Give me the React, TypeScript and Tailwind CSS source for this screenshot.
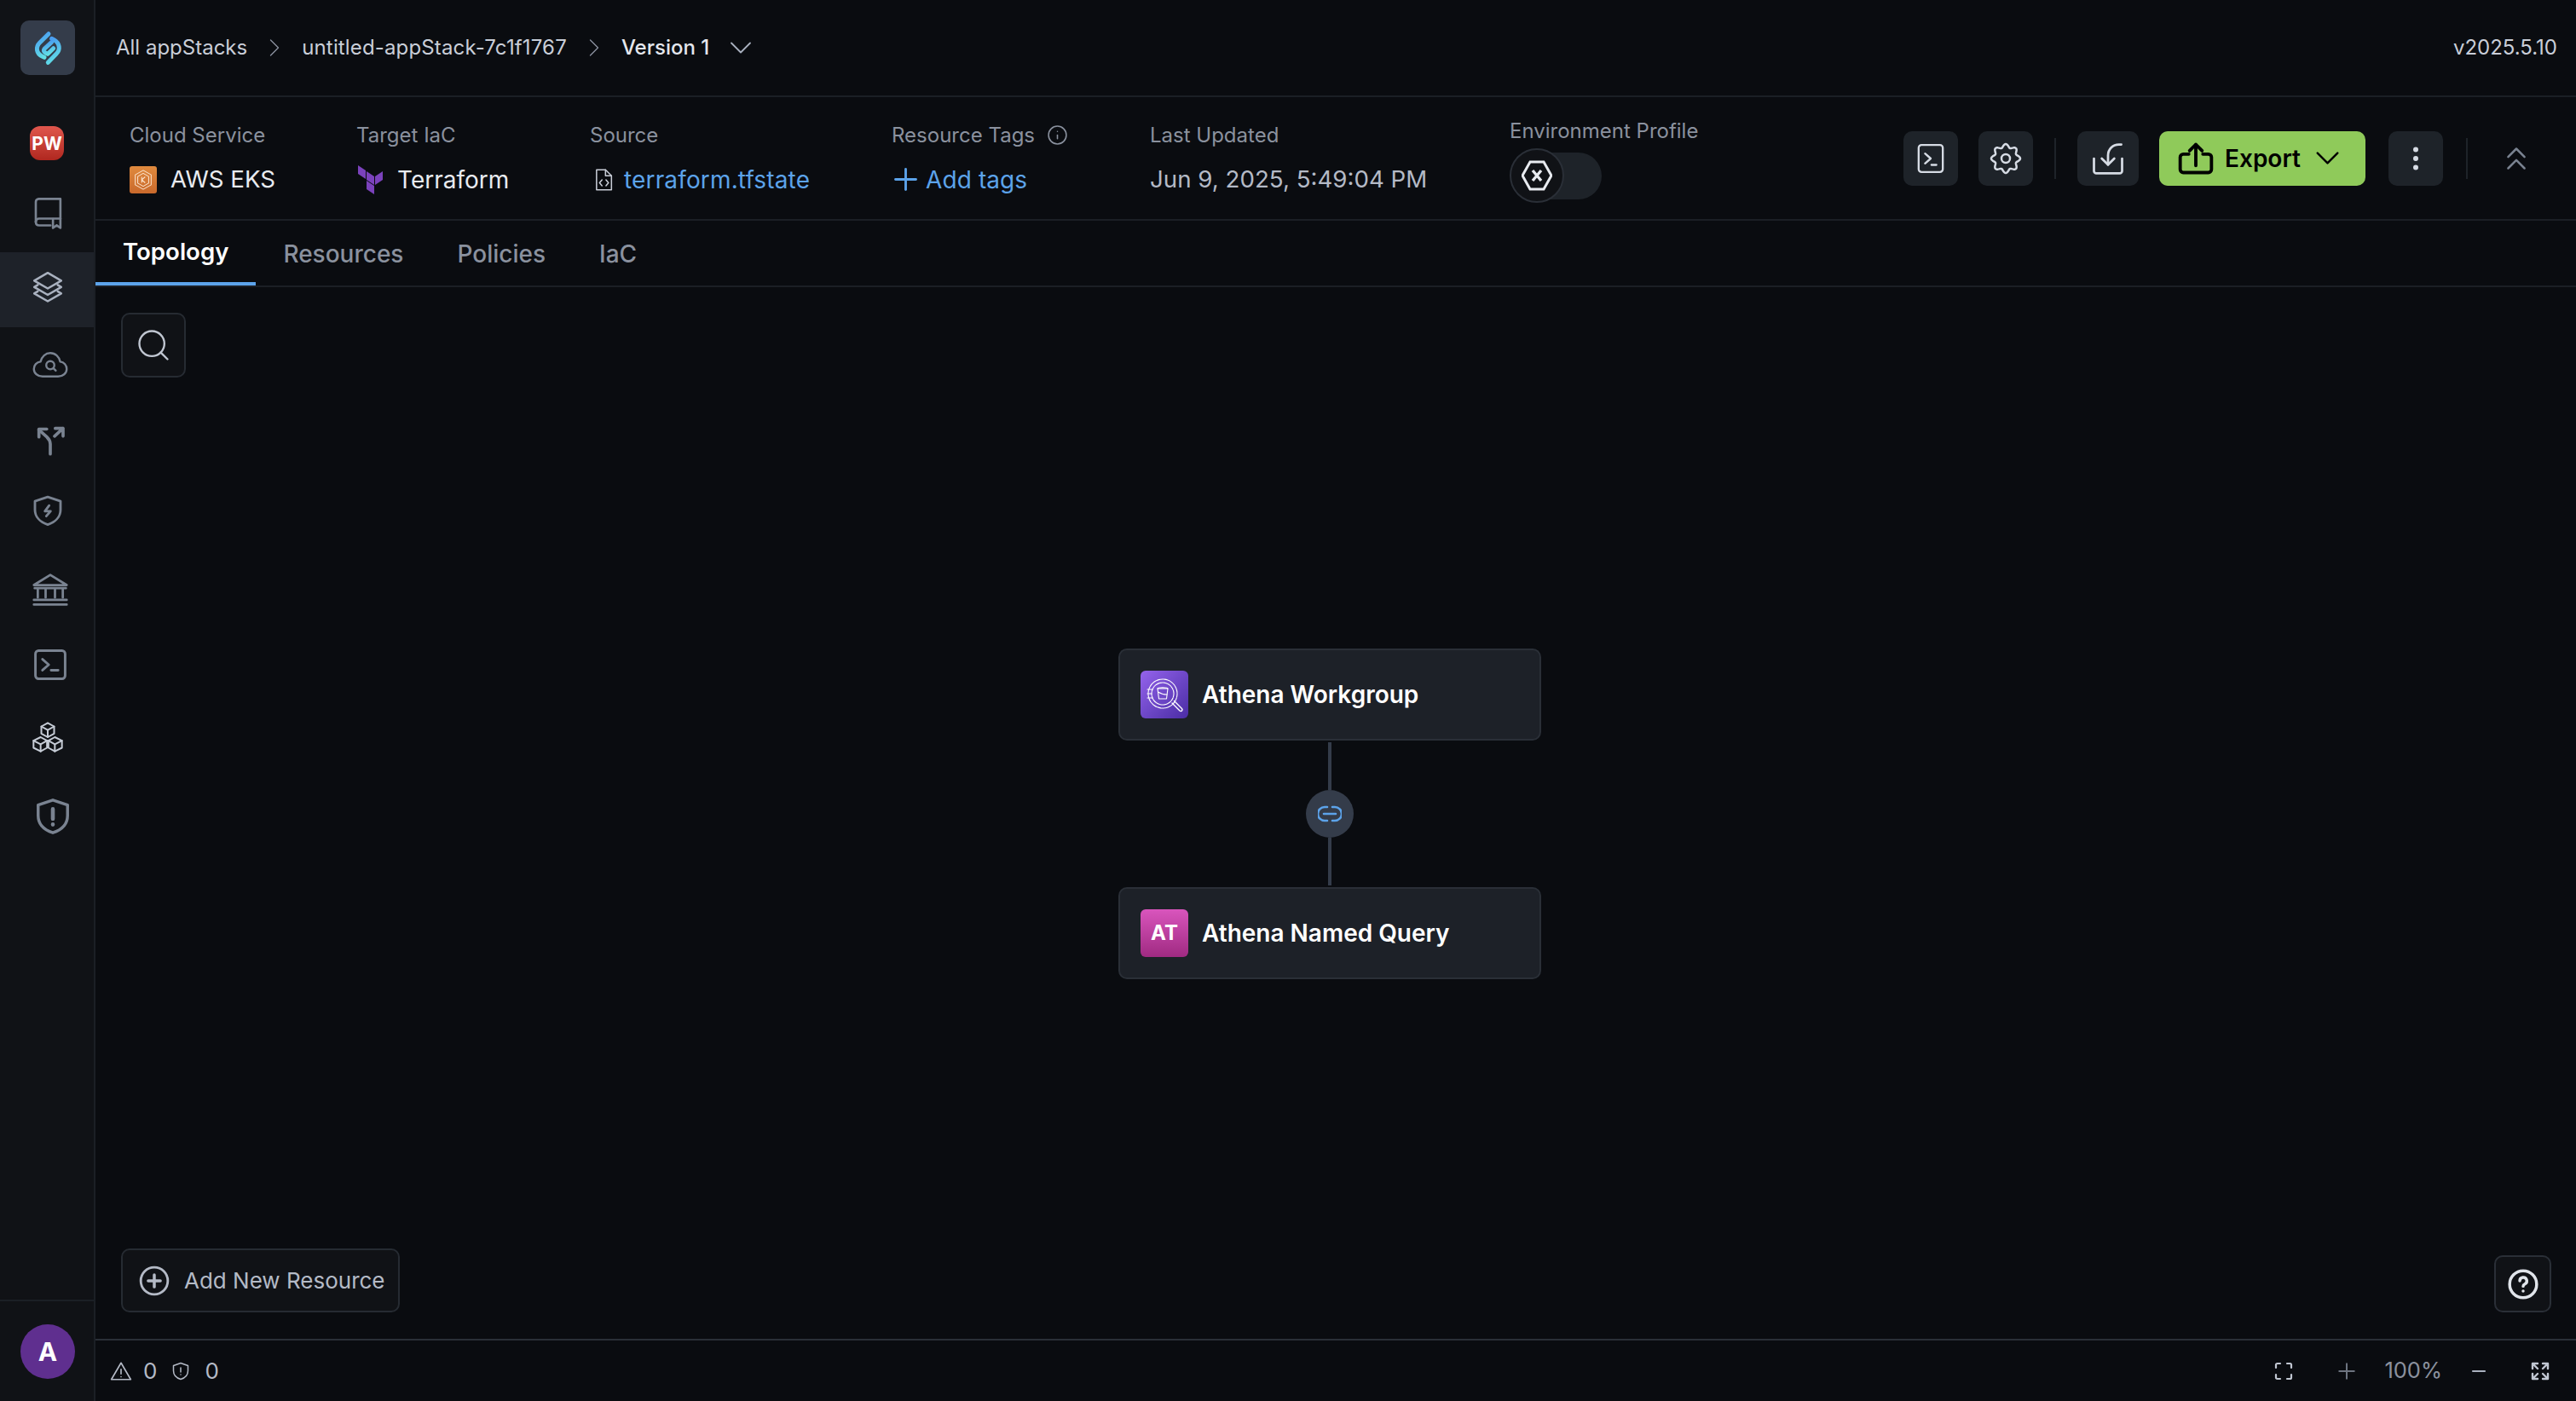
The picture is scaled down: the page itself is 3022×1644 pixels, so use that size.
import React from "react";
import { Search, ChevronRight, ChevronDown, Plus, Info, EllipsisVertical, ChevronsUp, Minus } from "lucide-react";

const S = (p: React.SVGProps<SVGSVGElement> & { children: React.ReactNode }) => (
  <svg viewBox="0 0 24 24" fill="none" stroke="currentColor" strokeLinecap="round" strokeLinejoin="round" {...p} />
);

const gearPath = (() => {
  const pts: string[] = [];
  for (let i = 0; i < 120; i++) {
    const t = (i / 120) * Math.PI * 2;
    const r = 9 + 1.2 * Math.cos(8 * t);
    pts.push(`${(12 + r * Math.sin(t)).toFixed(2)} ${(12 - r * Math.cos(t)).toFixed(2)}`);
  }
  return `M${pts.join("L")}Z`;
})();

const Logo = () => (
  <svg width="64" height="64" viewBox="0 0 192 192" fill="none" strokeWidth="15" strokeLinecap="round" strokeLinejoin="round">
    <defs>
      <linearGradient id="lg" x1="0.3" y1="0" x2="0.6" y2="1">
        <stop offset="0" stopColor="#4a9df0" />
        <stop offset="1" stopColor="#62e0e6" />
      </linearGradient>
    </defs>
    <path stroke="url(#lg)" d="M99 47 L68 78 C52 94 56 116 76 126 L84 130" />
    <path stroke="url(#lg)" d="M97 148 L126 118 C142 102 138 80 118 68 L110 64" />
    <path stroke="url(#lg)" d="M110 76 L84 100 C80 106 82 110 88 114 L96 118 L116 98" />
  </svg>
);

const BookIcon = () => (
  <S width="42" height="42" strokeWidth="1.5" className="text-[#7a8391]">
    <path d="M4 18V4.500C4 3.500 4.700 2.500 6 2.500h14.500v13.200" />
    <path d="M4 18c0-1.500 1-2.300 2.300-2.300h14.200" />
    <path d="M4 18c0 1.500 1 2.300 2.300 2.300h7.500M20.500 15.700v6.300l-2.500-1.800-2.500 1.800v-6" />
  </S>
);
const LayersIcon = () => (
  <S width="40" height="40" strokeWidth="1.500" className="text-[#a9b1bf]">
    <path d="M12 2.500 21.500 8 12 13.500 2.500 8Z" />
    <path d="M5 11 2.500 12.500 12 18l9.500-5.500L19 11" />
    <path d="M5 15.500 2.500 17 12 22.500 21.500 17 19 15.500" />
  </S>
);
const CloudIcon = () => (
  <S width="44" height="44" strokeWidth="1.300" className="text-[#7a8391]">
    <path d="M7 19.500c-3 0-5.500-2-5.500-4.800 0-2.500 1.800-4.400 4.300-4.700C6.500 6.700 9 4.500 12 4.500c3.200 0 5.700 2.300 6.300 5.500 2.500.3 4.200 2.300 4.200 4.700 0 2.800-2.500 4.800-5.500 4.800Z" />
    <circle cx="12" cy="12.300" r="2.600" />
    <path d="m14 14.300 1.500 1.500" />
  </S>
);
const SplitIcon = () => (
  <S width="40" height="40" strokeWidth="2.200" className="text-[#7a8391]">
    <path d="M12 22v-7c0-2-1-3.500-2.500-5L4 5" />
    <path d="M4 10V4.500h5.500" />
    <path d="M15 9.500 21 4M15.500 4H21v5.500" />
  </S>
);
const ShieldBolt = () => (
  <S width="40" height="40" strokeWidth="1.700" className="text-[#7a8391]">
    <path d="M12 2.500 21 5.500v6c0 5-3.700 8.700-9 10.500-5.300-1.800-9-5.500-9-10.500v-6Z" />
    <path d="m13 8.500-3 4h4l-3 3.500" />
  </S>
);
const BankIcon = () => (
  <S width="44" height="44" strokeWidth="1.500" className="text-[#7a8391]">
    <path d="M12 2.500 22.500 9h-21Z" />
    <path d="M4 11v6M9 11v6M15 11v6M20 11v6M2 11h20" />
    <path d="M1.500 18.500h21M1.500 21.500h21" />
  </S>
);
const TermBox = () => (
  <S width="44" height="44" strokeWidth="1.600" className="text-[#7a8391]">
    <rect x="2.500" y="3" width="19" height="18" rx="2" />
    <path d="m7 8.500 4 3.500-4 3.500M12.500 15.500h4.500" />
  </S>
);
const BoxesIcon = () => (
  <S width="40" height="40" strokeWidth="1.200" className="text-[#c6ccd6]">
    <path d="m12 2 4.500 2.500v5L12 12 7.500 9.500v-5Z" />
    <path d="m7.500 4.500 4.500 2.500 4.500-2.500M12 7v5" />
    <path d="m7 12 4.500 2.500v5L7 22l-5-2.500v-5Z" />
    <path d="m2 14.500 5 2.500 4.500-2.500M7 17v5" />
    <path d="m17 12 5 2.500v5L17 22l-4.500-2.500v-5Z" />
    <path d="m12.500 14.500 4.500 2.500 5-2.500M17 17v5" />
  </S>
);
const ShieldAlert = () => (
  <S width="46" height="46" strokeWidth="1.800" className="text-[#7a8391]">
    <path d="M12 2 21 5v6.500c0 5.300-3.700 8.800-9 10.500-5.300-1.700-9-5.200-9-10.500V5Z" />
    <path d="M12 7.500v6M12 16.800v.2" strokeWidth="2.400" />
  </S>
);

const Label = ({ children }: { children: React.ReactNode }) => (
  <span className="text-[24px] leading-[32px] text-[#8a919e]">{children}</span>
);

const IconBtn = ({ children, w = "w-[64px]" }: { children: React.ReactNode; w?: string }) => (
  <button className={`flex h-[64px] ${w} items-center justify-center rounded-[10px] bg-[#1e2329] text-[#d6dbe4]`}>{children}</button>
);

const Divider = () => <div className="h-[48px] w-[2px] bg-[#1e2329]" />;

const AthenaIcon = () => (
  <div className="flex h-[56px] w-[56px] items-center justify-center rounded-[6px] bg-gradient-to-br from-[#9563ec] to-[#4b2ca5]">
    <svg width="56" height="56" viewBox="0 0 56 56" fill="none" stroke="#fff" strokeWidth="1.100" strokeLinecap="round" strokeLinejoin="round">
      <circle cx="26" cy="27" r="17" strokeDasharray="4 0.800" />
      <circle cx="26" cy="27" r="13" strokeDasharray="4 0.800" />
      <path d="M20 21h12l-1.500 12h-9Z" />
      <path d="M20 21c0-1.500 12-1.500 12 0" />
      <path d="M20.500 25c3 2 7 3 10.500 3" />
      <path d="m37 38 9 9c2 1.500 4-.5 2.500-2.500l-9-9" strokeWidth="1.400" />
      <path d="M8 22h6M8 27h5M8 32h6" />
    </svg>
  </div>
);

const Node = ({ icon, label, className }: { icon: React.ReactNode; label: string; className: string }) => (
  <div className={`absolute left-[1200px] flex h-[108px] w-[496px] items-center gap-[16px] rounded-[10px] border-2 border-[#2a2f37] bg-[#1d2128] pl-[24px] ${className}`}>
    {icon}
    <span className="text-[28px] font-semibold text-white">{label}</span>
  </div>
);

export default function App() {
  return (
    <div className="flex h-screen w-screen overflow-hidden bg-[#0a0c10] font-['Inter',sans-serif] text-white">
      <aside className="flex h-full w-[112px] shrink-0 flex-col border-r-2 border-[#1b1f25] bg-[#101216]">
        <div className="mx-[24px] mt-[24px] flex h-[64px] w-[64px] items-center justify-center rounded-[10px] bg-[#343c4a]">
          <Logo />
        </div>
        <div className="mt-[60px] ml-[35px] flex h-[40px] w-[40px] items-center justify-center rounded-[12px] bg-gradient-to-b from-[#e0564d] to-[#b0271f] text-[21px] font-bold leading-none text-white">
          PW
        </div>
        <div className="mt-[43px] flex h-[38px] items-center justify-center pl-[2px]"><BookIcon /></div>
        <div className="mt-[27px] flex h-[88px] items-center justify-center bg-[#1e2229] pb-[8px] pl-[2px]"><LayersIcon /></div>
        <div className="mt-[23px] flex h-[42px] items-center justify-center pl-[8px]"><CloudIcon /></div>
        <div className="mt-[47px] flex h-[40px] items-center justify-center pl-[8px]"><SplitIcon /></div>
        <div className="mt-[45px] flex h-[36px] items-center justify-center pl-[2px]"><ShieldBolt /></div>
        <div className="mt-[53px] flex h-[44px] items-center justify-center pl-[8px]"><BankIcon /></div>
        <div className="mt-[45px] flex h-[42px] items-center justify-center pl-[8px]"><TermBox /></div>
        <div className="mt-[44px] flex h-[40px] items-center justify-center pl-[2px]"><BoxesIcon /></div>
        <div className="mt-[51px] flex h-[44px] items-center justify-center pl-[14px]"><ShieldAlert /></div>
        <div className="mt-auto flex h-[119px] items-start justify-center border-t-2 border-[#1b1f25] pl-[2px] pt-[27px]">
          <div className="flex h-[64px] w-[64px] items-center justify-center rounded-full bg-[#5f2f8f] text-[30px] font-bold text-white">A</div>
        </div>
      </aside>

      <main className="flex min-w-0 flex-1 flex-col">
        <header className="flex h-[114px] shrink-0 items-center border-b-2 border-[#1b1f25] pl-[24px] pr-[22px] text-[24px] text-[#c9ced8]">
          <span>All appStacks</span>
          <ChevronRight size={36} strokeWidth={0.9} className="mx-[14px] text-[#8a919e]" />
          <span className="tracking-[0.15px]">untitled-appStack-7c1f1767</span>
          <ChevronRight size={36} strokeWidth={0.9} className="mx-[14px] text-[#8a919e]" />
          <span className="font-medium text-[#e4e7ed]">Version 1</span>
          <ChevronDown size={44} strokeWidth={1} className="ml-[15px] text-[#a9b1bf]" />
          <span className="ml-auto text-[#c9ced8]">v2025.5.10</span>
        </header>

        <section className="flex h-[145px] shrink-0 items-center border-b-2 border-[#1b1f25] pl-[40px] pr-[22px]">
          <div className="flex w-[266px] flex-col gap-[18px]">
            <Label>Cloud Service</Label>
            <div className="flex h-[36px] items-center gap-[16px] text-[27.7px] text-[#e8ebf0]">
              <span className="flex h-[32px] w-[32px] items-center justify-center rounded-[3px] bg-gradient-to-b from-[#e08a3e] to-[#c9692c]">
                <svg width="28" height="28" viewBox="0 0 24 24" fill="none" stroke="#fbe3cd" strokeWidth="0.900" strokeLinejoin="round"><path d="M12 2.500 20 7v10l-8 4.500L4 17V7Z" /><path d="M12 5.500 17.500 8.700v6.600L12 18.500l-5.500-3.200V8.700Z" /><path d="M10.500 9v6M14 9l-3.500 3 3.500 3" /></svg>
              </span>
              AWS EKS
            </div>
          </div>
          <div className="flex w-[274px] flex-col gap-[18px]">
            <Label>Target IaC</Label>
            <div className="flex h-[36px] items-center gap-[16px] pl-[2px] text-[28px] text-[#e8ebf0]">
              <svg width="30" height="34" viewBox="0 0 30 34" fill="#7b42bc"><path d="M0 0 9 6v10L0 10Z" /><path d="M10 7 19 13v10l-9-6Z" /><path d="M20 13l9-6v10l-9 6Z" /><path d="M10 18l9 6v10l-9-6Z" /></svg>
              Terraform
            </div>
          </div>
          <div className="flex w-[354px] flex-col gap-[18px]">
            <Label>Source</Label>
            <div className="flex h-[36px] items-center gap-[10px] pl-[2px] text-[28px] tracking-[0.15px] text-[#5ca3ea]">
              <S width="28" height="32" strokeWidth="1.300" className="text-[#c9ced8]">
                <path d="M5 2h9l6 6v14H5Z" />
                <path d="M14 2v6h6" />
                <path d="m10.500 12-2.500 3 2.500 3M14.500 12l2.500 3-2.500 3" />
              </S>
              terraform.tfstate
            </div>
          </div>
          <div className="flex w-[303px] flex-col gap-[18px]">
            <div className="flex items-center gap-[14px]">
              <Label>Resource Tags</Label>
              <Info size={25} strokeWidth={1.5} className="text-[#8a919e]" />
            </div>
            <div className="-ml-[4px] flex h-[36px] items-center gap-[3px] text-[28px] tracking-[0.1px] text-[#5ca3ea]">
              <Plus size={41} strokeWidth={1.7} />
              Add tags
            </div>
          </div>
          <div className="flex w-[422px] flex-col gap-[18px]">
            <Label>Last Updated</Label>
            <div className="flex h-[36px] items-center text-[27.7px] text-[#b4bac6]">Jun 9, 2025, 5:49:04 PM</div>
          </div>
          <div className="flex flex-col gap-[4px] pt-[4px]">
            <Label>Environment Profile</Label>
            <div className="relative h-[64px] w-[108px]">
              <div className="absolute left-[40px] top-[5px] h-[55px] w-[68px] rounded-r-full bg-[#1e2329]" />
              <div className="absolute left-0 top-0 flex h-[64px] w-[64px] items-center justify-center rounded-full border-2 border-[#2a2f37] bg-[#101216]">
                <svg width="36" height="40" viewBox="0 0 36 40" fill="none" stroke="#e8ebf0" strokeWidth="3"><path d="M10 4h16l9 16-9 16H10L1 20Z" /><path d="m13 14 10 12M23 14 13 26" strokeWidth="3.400" /></svg>
              </div>
            </div>
          </div>
          <div className="ml-auto flex items-center">
            <IconBtn><S width="40" height="40" strokeWidth="1.400"><rect x="3.500" y="2.500" width="17" height="19" rx="2" /><path d="m8 8.500 4 3.500-4 3.500M12.500 16.500h3.500" /></S></IconBtn>
            <div className="ml-[24px]">
              <IconBtn><S width="40" height="40" strokeWidth="1.500"><path d={gearPath} /><circle cx="12" cy="12" r="3" /></S></IconBtn>
            </div>
            <div className="ml-[25px]"><Divider /></div>
            <div className="ml-[25px]">
              <IconBtn w="w-[72px]"><S width="44" height="44" strokeWidth="1.500"><path d="M3 12v8c0 .8.700 1.500 1.500 1.500h15c.8 0 1.500-.7 1.500-1.500v-8" /><path d="M20.500 3H19c-4 0-7 3-7 7v6" /><path d="m8 12 4 4 4-4" /></S></IconBtn>
            </div>
            <button className="ml-[24px] flex h-[64px] w-[242px] items-center rounded-[10px] bg-[#8fca5a] pl-[21px] text-black">
              <S width="44" height="44" strokeWidth="2.100">
                <path d="M7.500 9.200H4c-1.100 0-2 .9-2 2V19c0 1.100.9 2 2 2h16c1.100 0 2-.9 2-2v-7.800c0-1.100-.9-2-2-2h-3.500" />
                <path d="M12 16.500V3M8 7l4-4 4 4" />
              </S>
              <span className="ml-[12px] text-[28px] font-semibold">Export</span>
              <ChevronDown size={47} strokeWidth={1.300} className="ml-[8px]" />
            </button>
            <div className="ml-[27px]">
              <IconBtn><EllipsisVertical size={36} strokeWidth={2} /></IconBtn>
            </div>
            <div className="ml-[27px]"><Divider /></div>
            <div className="ml-[34px] mr-[25px] flex h-[64px] items-center">
              <ChevronsUp size={46} strokeWidth={1.300} className="text-[#7a8391]" />
            </div>
          </div>
        </section>

        <nav className="flex h-[78px] shrink-0 items-stretch border-b-2 border-[#1b1f25] text-[28px] font-medium text-[#8a919e]">
          <div className="flex items-center border-b-4 border-[#5ca3ea] px-[32px] pt-[2px] text-[27.6px] font-semibold text-white">Topology</div>
          <div className="flex items-center pl-[32px] pr-[31px] pt-[2px]">Resources</div>
          <div className="flex items-center pl-[32px] pr-[31px] pt-[2px]">Policies</div>
          <div className="flex items-center px-[32px] pt-[2px]">IaC</div>
        </nav>

        <div className="relative min-h-0 flex-1">
          <button className="absolute left-[30px] top-[30px] flex h-[76px] w-[76px] items-center justify-center rounded-[10px] border-2 border-[#262b32] bg-[#101216] text-[#c0c6d1]">
            <Search size={44} strokeWidth={1.300} />
          </button>

          <Node className="top-[424px]" icon={<AthenaIcon />} label="Athena Workgroup" />
          <div className="absolute left-[1446px] top-[534px] h-[56px] w-[4px] bg-[#343c4a]" />
          <div className="absolute left-[1420px] top-[590px] flex h-[56px] w-[56px] items-center justify-center rounded-full bg-[#343c4a] text-[#5ca3ea]">
            <svg width="28" height="20" viewBox="0 0 28 20" fill="none" stroke="currentColor" strokeWidth="2.600" strokeLinecap="round"><path d="M11 2H8a8 8 0 0 0 0 16h3M17 2h3a8 8 0 0 1 0 16h-3M7 10h14" /></svg>
          </div>
          <div className="absolute left-[1446px] top-[646px] h-[56px] w-[4px] bg-[#343c4a]" />
          <Node
            className="top-[704px]"
            icon={
              <div className="flex h-[56px] w-[56px] items-center justify-center rounded-[6px] bg-gradient-to-b from-[#d955bd] to-[#a02a82] text-[24px] font-bold text-white">AT</div>
            }
            label="Athena Named Query"
          />

          <button className="absolute bottom-[31px] left-[30px] flex h-[75px] w-[327px] items-center gap-[16px] rounded-[10px] border-2 border-[#262b32] bg-[#101216] pl-[18px] text-[26px] text-[#b4bac6]">
            <S width="38" height="38" strokeWidth="1.800"><circle cx="12" cy="12" r="10" /><path d="M12 7.500v9M7.500 12h9" strokeWidth="2.200" /></S>
            Add New Resource
          </button>
          <button className="absolute bottom-[31px] right-[29px] flex h-[67px] w-[67px] items-center justify-center rounded-[10px] border-2 border-[#2a2f37] bg-[#101216] text-[#e0e4ea]">
            <S width="38" height="38" strokeWidth="2.200"><circle cx="12" cy="12" r="10" /><path d="M9.500 9.500a2.600 2.600 0 1 1 3.800 2.300c-.9.500-1.300 1-1.300 1.700" /><path d="M12 17v.1" /></S>
          </button>
        </div>

        <footer className="flex h-[73px] shrink-0 items-center border-t-2 border-[#2a2f37] pl-[17px] text-[26px] text-[#b4bac6]">
          <S width="26" height="26" strokeWidth="1.500"><path d="M12 3 22.500 21h-21Z" /><path d="M12 10v5M12 18v.1" /></S>
          <span className="ml-[13px]">0</span>
          <S width="24" height="24" strokeWidth="1.500" className="ml-[16px]"><path d="M12 2.500 20.500 5.500v6c0 5-3.500 8.500-8.500 10-5-1.500-8.500-5-8.500-10v-6Z" /><path d="M12 8v5M12 16v.1" /></S>
          <span className="ml-[16px]">0</span>
          <div className="ml-auto flex items-center pr-[30px]">
            <S width="24" height="24" strokeWidth="2.200" className="text-[#c0c6d1]"><path d="M3 8V4.500C3 3.700 3.700 3 4.500 3H8M16 3h3.500c.8 0 1.500.7 1.500 1.500V8M21 16v3.500c0 .8-.7 1.500-1.500 1.500H16M8 21H4.500C3.700 21 3 20.300 3 19.500V16" /></S>
            <Plus size={30} strokeWidth={1.600} className="ml-[47px] text-[#6d7480]" />
            <span className="ml-[29px] text-[25.500px] text-[#8a919e]">100%</span>
            <Minus size={24} strokeWidth={2.200} className="ml-[31px] text-[#a9b1bf]" />
            <S width="24" height="24" strokeWidth="2.400" className="ml-[48px] text-[#c0c6d1]"><path d="M9 3H3v6M3 3l6 6M15 3h6v6M21 3l-6 6M9 21H3v-6M3 21l6-6M15 21h6v-6M21 21l-6-6" /></S>
          </div>
        </footer>
      </main>
    </div>
  );
}
